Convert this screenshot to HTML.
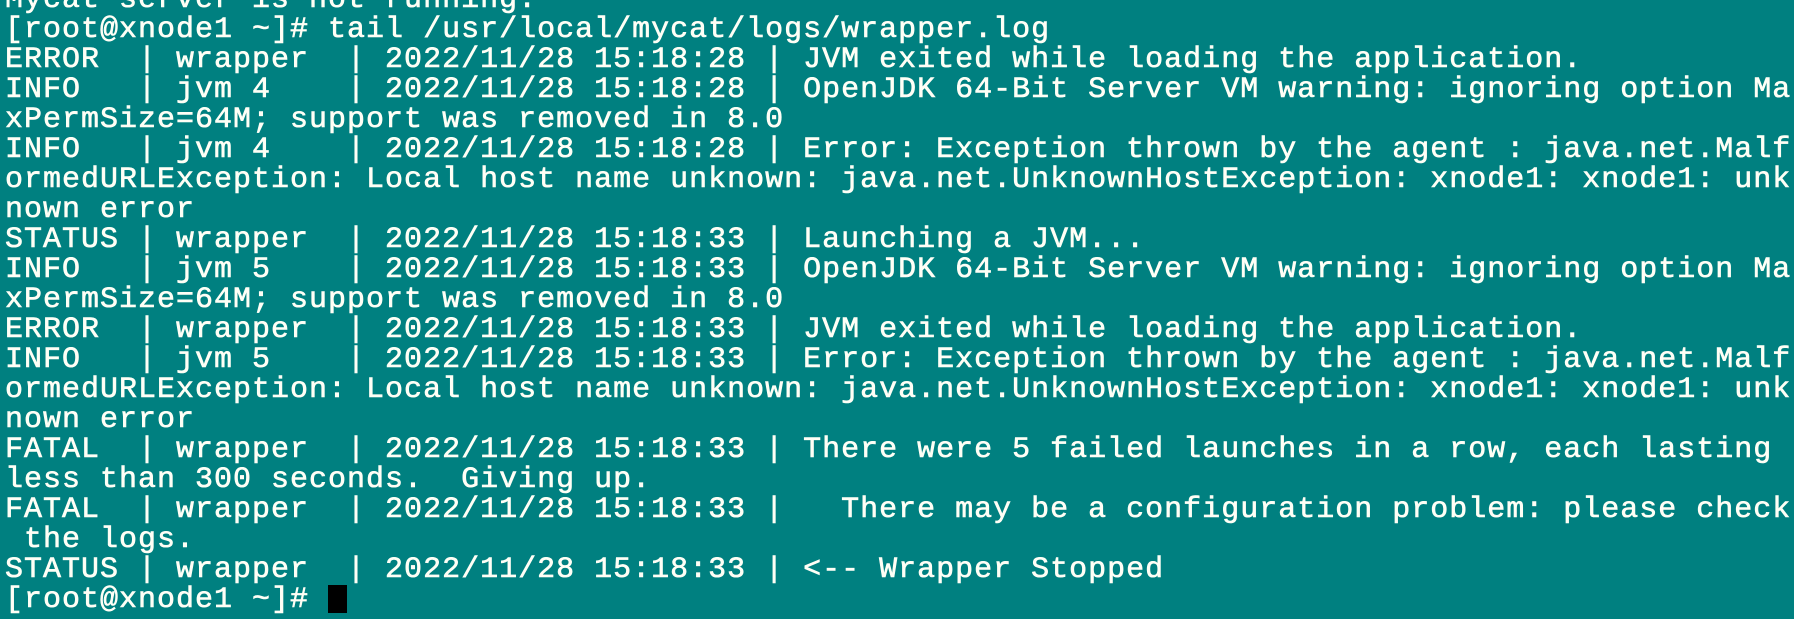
<!DOCTYPE html>
<html><head><meta charset="utf-8"><style>
html,body{margin:0;padding:0;width:1794px;height:619px;overflow:hidden;background:#008080;}
pre{position:absolute;left:5px;top:-15px;margin:0;font-family:"Liberation Mono",monospace;font-size:30px;line-height:30px;letter-spacing:1px;color:#fffff6;white-space:pre;-webkit-text-stroke:0.6px #fffff6;}
.cur{display:inline-block;width:19px;height:28px;background:#000;vertical-align:-6px;}
</style></head><body><pre>Mycat server is not running.
[root@xnode1 ~]# tail /usr/local/mycat/logs/wrapper.log
ERROR  | wrapper  | 2022/11/28 15:18:28 | JVM exited while loading the application.
INFO   | jvm 4    | 2022/11/28 15:18:28 | OpenJDK 64-Bit Server VM warning: ignoring option Ma
xPermSize=64M; support was removed in 8.0
INFO   | jvm 4    | 2022/11/28 15:18:28 | Error: Exception thrown by the agent : java.net.Malf
ormedURLException: Local host name unknown: java.net.UnknownHostException: xnode1: xnode1: unk
nown error
STATUS | wrapper  | 2022/11/28 15:18:33 | Launching a JVM...
INFO   | jvm 5    | 2022/11/28 15:18:33 | OpenJDK 64-Bit Server VM warning: ignoring option Ma
xPermSize=64M; support was removed in 8.0
ERROR  | wrapper  | 2022/11/28 15:18:33 | JVM exited while loading the application.
INFO   | jvm 5    | 2022/11/28 15:18:33 | Error: Exception thrown by the agent : java.net.Malf
ormedURLException: Local host name unknown: java.net.UnknownHostException: xnode1: xnode1: unk
nown error
FATAL  | wrapper  | 2022/11/28 15:18:33 | There were 5 failed launches in a row, each lasting
less than 300 seconds.  Giving up.
FATAL  | wrapper  | 2022/11/28 15:18:33 |   There may be a configuration problem: please check
 the logs.
STATUS | wrapper  | 2022/11/28 15:18:33 | &lt;-- Wrapper Stopped
[root@xnode1 ~]# <span class="cur"></span></pre></body></html>
